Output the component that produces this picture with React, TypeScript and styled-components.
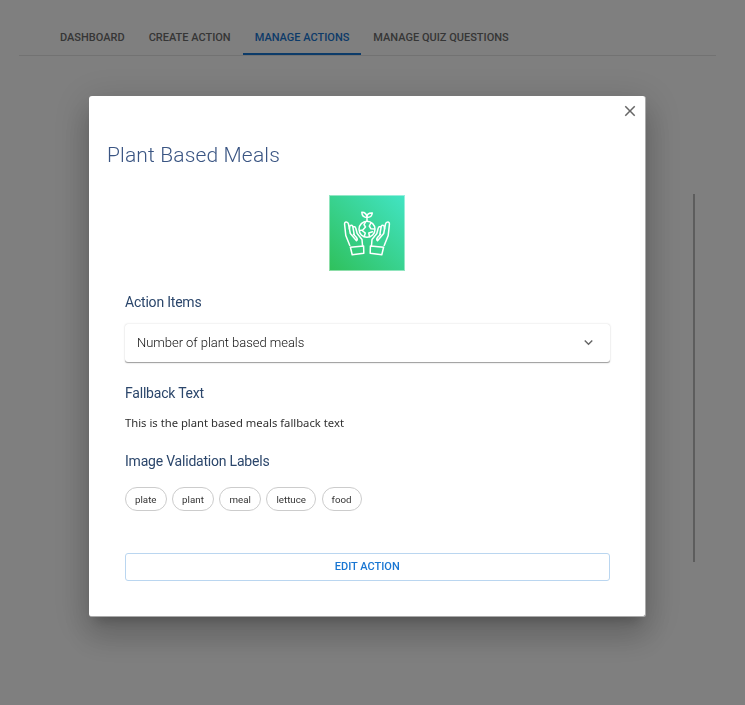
import React from "react";
import styled, { createGlobalStyle } from "styled-components";

const GlobalStyle = createGlobalStyle`
  *, *::before, *::after { box-sizing: border-box; }
  body { margin: 0; background: #fff; font-family: Roboto, sans-serif; overflow: hidden; }
  h1, h2, p { margin: 0; font-weight: 400; }
  button { font-family: inherit; background: none; border: 0; padding: 0; margin: 0; }
`;

const Page = styled.div`
  height: 100vh;
  padding: 19px 29px 0 19px;
`;

const TabBar = styled.nav`
  display: flex;
  height: 37px;
  padding-left: 29px;
  border-bottom: 1px solid #e4e4e4;
`;

const Tab = styled.button<{ $active?: boolean }>`
  height: 36px;
  padding: 3px 12px 0 12px;
  font-size: 11px;
  font-weight: 500;
  line-height: 14px;
  letter-spacing: 0;
  text-transform: uppercase;
  white-space: nowrap;
  color: ${({ $active }) => ($active ? "#1976d2" : "#6c6c6c")};
  border-bottom: 2px solid ${({ $active }) => ($active ? "#1976d2" : "transparent")};
`;

const ContentPane = styled.div`
  width: 676px;
  height: 368px;
  margin-top: 138px;
  border-right: 2px solid #bbb;
`;

const Backdrop = styled.div`
  position: fixed;
  inset: 0;
  padding: 96px 99px 0 89px;
  background: rgba(0, 0, 0, 0.5);
`;

const Dialog = styled.section`
  display: flex;
  flex-direction: column;
  height: 521px;
  border: solid #aaa;
  border-width: 0 1px 1px 0;
  border-radius: 3px;
  background: #fff;
  box-shadow: 0 8.8px 12px -5.6px rgba(0, 0, 0, 0.2),
    0 19.2px 30.4px 2.4px rgba(0, 0, 0, 0.14),
    0 7.2px 36.8px 6.4px rgba(0, 0, 0, 0.12);
`;

const CloseButton = styled.button`
  display: flex;
  align-self: flex-end;
  margin: 6px 5.6px 0 0;
  height: 18px;
`;

const Title = styled.h1`
  margin: 21px 0 0 18px;
  font-size: 21px;
  line-height: 28px;
  font-weight: 300;
  letter-spacing: 0.15px;
  color: #3a5583;
`;

const Body = styled.div`
  display: flex;
  flex-direction: column;
  padding: 26px 35.5px 0 36px;
`;

const ActionImage = styled.svg`
  align-self: center;
  display: block;
  margin-right: 1px;
`;

const Heading = styled.h2<{ $top: number }>`
  margin-top: ${({ $top }) => $top}px;
  font-size: 14px;
  line-height: 20px;
  letter-spacing: -0.21px;
  color: #2b466b;
`;

const Accordion = styled.button`
  display: flex;
  align-items: center;
  justify-content: space-between;
  height: 38px;
  margin-top: 12px;
  padding: 0 12.6px 1px 12px;
  border-radius: 3px;
  font-size: 13px;
  font-weight: 300;
  letter-spacing: -0.04px;
  color: #111;
  box-shadow: 0 1.6px 0.8px -0.8px rgba(0, 0, 0, 0.2),
    0 0.8px 0.8px 0 rgba(0, 0, 0, 0.14), 0 0.8px 2.4px 0 rgba(0, 0, 0, 0.12);
`;

const FallbackText = styled.p`
  margin-top: 11px;
  font-family: "Noto Sans", sans-serif;
  font-size: 11.25px;
  line-height: 18px;
  color: #303030;
`;

const ChipRow = styled.div`
  display: flex;
  gap: 5.6px;
  margin-top: 16px;
`;

const Chip = styled.span`
  height: 24px;
  padding: 0 9px;
  border: 1px solid #ccc;
  border-radius: 12px;
  font-size: 9.75px;
  line-height: 23px;
  color: #333;
`;

const EditButton = styled.button`
  height: 28px;
  margin-top: 42px;
  padding-bottom: 2px;
  border: 1px solid #bad6f0;
  border-radius: 3px;
  font-size: 11px;
  font-weight: 500;
  text-transform: uppercase;
  color: #1976d2;
`;

const labels = ["plate", "plant", "meal", "lettuce", "food"];
const tabs = ["Dashboard", "Create Action", "Manage Actions", "Manage Quiz Questions"];

const Hand = () => (
  <g>
    <path d="M20.8 50.5 L16.8 40.5 L15.6 29.5 Q15.4 27 17.2 27 Q19 27 19.5 29 L21.3 38.5 L27.5 45.8 Q29 44.5 27.5 42.5 L24.5 39.2" />
    <path d="M20.4 34 L21 30.7 Q22.8 29.7 23.7 31.2 L25.2 39.5 M24 32 Q26 31 26.8 33.2 L28.2 38.5 L33 44.5 L33.5 50.5" />
    <path d="M21.4 52.2 L34.6 51 L34.8 58.2 L23.2 59.7 Z" />
  </g>
);

const EarthCareImage = () => (
  <ActionImage width="76" height="76" viewBox="0 0 76 76">
    <defs>
      <linearGradient id="green" x1="0" y1="1" x2="1" y2="0">
        <stop offset="0" stopColor="#2fc05b" />
        <stop offset="1" stopColor="#42e4c4" />
      </linearGradient>
    </defs>
    <rect width="76" height="76" fill="url(#green)" />
    <rect x=".5" y=".5" width="75" height="75" fill="none" stroke="#fff" strokeOpacity=".45" />
    <g fill="none" stroke="#fff" strokeWidth="1.5" strokeLinecap="round" strokeLinejoin="round">
      <circle cx="38" cy="34.3" r="8" />
      <path d="M38 26 V21.5 M38 22.5 Q33 22.5 32.8 17.3 Q37.6 17.3 38 22.5 M38 21.5 Q38.5 17.6 43.3 18 Q42.8 22.5 38 22.5" />
      <path d="M36.5 27 L35 29.5 L36.5 32 L33.8 35 L31 35.5 M42 27.8 L40.3 31 L42 33.8 L45.3 34 M35.3 41.3 L36.3 38 L33.8 36.2 M40.5 41.5 L39.8 38 L43.5 36.8" />
      <Hand />
      <g transform="translate(76 0) scale(-1 1)"><Hand /></g>
    </g>
  </ActionImage>
);

export default function App() {
  return (
    <>
      <GlobalStyle />
      <Page>
        <TabBar>
          {tabs.map((t) => <Tab key={t} $active={t === "Manage Actions"}>{t}</Tab>)}
        </TabBar>
        <ContentPane />
      </Page>
      <Backdrop>
        <Dialog role="dialog" aria-label="Plant Based Meals">
          <CloseButton aria-label="Close">
            <svg width="18" height="18" viewBox="0 0 24 24" fill="#666">
              <path d="M19 6.41 17.59 5 12 10.59 6.41 5 5 6.41 10.59 12 5 17.59 6.41 19 12 13.41 17.59 19 19 17.59 13.41 12z" />
            </svg>
          </CloseButton>
          <Title>Plant Based Meals</Title>
          <Body>
            <EarthCareImage />
            <Heading $top={21}>Action Items</Heading>
            <Accordion>
              <span>Number of plant based meals</span>
              <svg width="17" height="17" viewBox="0 0 24 24" fill="#666">
                <path d="M16.59 8.59 12 13.17 7.41 8.59 6 10l6 6 6-6z" />
              </svg>
            </Accordion>
            <Heading $top={21}>Fallback Text</Heading>
            <FallbackText>This is the plant based meals fallback text</FallbackText>
            <Heading $top={19}>Image Validation Labels</Heading>
            <ChipRow>
              {labels.map((l) => <Chip key={l}>{l}</Chip>)}
            </ChipRow>
            <EditButton>Edit Action</EditButton>
          </Body>
        </Dialog>
      </Backdrop>
    </>
  );
}
